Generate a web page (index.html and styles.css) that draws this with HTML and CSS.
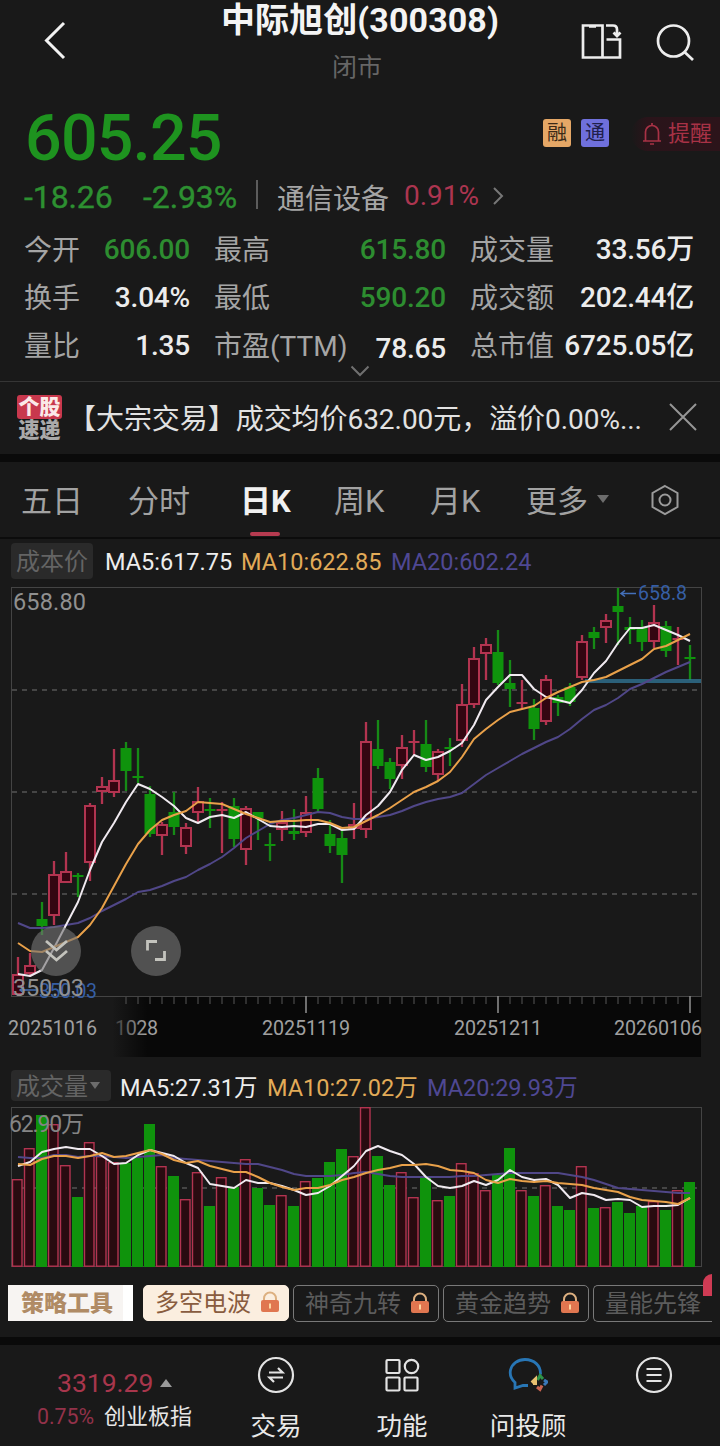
FILE: index.html
```html
<!DOCTYPE html>
<html lang="zh-CN">
<head>
<meta charset="utf-8">
<title>中际旭创(300308)</title>
<link rel="stylesheet" href="styles.css">
</head>
<body>
<header class="topbar">
  <svg class="back" width="24" height="42" viewBox="0 0 24 42"><path d="M21 3 3.500 20.500 21 38"/></svg>
  <div class="heading"><h1>中际旭创(300308)</h1><p>闭市</p></div>
  <div class="top-actions">
    <svg width="42" height="40" viewBox="0 0 42 40"><path d="M2 3.500h19.500v32H2zM8 4.500h7M21.500 35.500H39V17.500H25.500M25 3.500h7q4 0 4 4V13M32.500 10.500 36 14l3.500-3.500"/></svg>
    <svg width="42" height="40" viewBox="0 0 42 40"><circle cx="18.500" cy="19" r="15.500"/><path d="m29.500 30 8.500 8"/></svg>
  </div>
</header>

<section class="quote">
  <div class="price-row">
    <strong class="price">605.25</strong>
    <span class="tag margin">融</span><span class="tag connect">通</span>
    <span class="remind"><svg width="20" height="24" viewBox="0 0 20 24"><path d="M1 19h18M3.500 19v-9a6.500 6.500 0 0 1 13 0v9M10 3.500V1M8 22h4"/></svg>提醒</span>
  </div>
  <div class="change-row">
    <span class="chg">-18.26</span><span class="chg pct">-2.93%</span><i class="bar"></i>
    <span class="sector">通信设备</span><span class="sector-pct">0.91%</span>
    <svg width="12" height="20" viewBox="0 0 12 20"><path d="m2 2 8 8-8 8"/></svg>
  </div>
  <dl class="stats">
    <div><dt>今开</dt><dd class="down">606.00</dd></div>
    <div><dt>最高</dt><dd class="down">615.80</dd></div>
    <div><dt>成交量</dt><dd>33.56万</dd></div>
    <div><dt>换手</dt><dd>3.04%</dd></div>
    <div><dt>最低</dt><dd class="down">590.20</dd></div>
    <div><dt>成交额</dt><dd>202.44亿</dd></div>
    <div><dt>量比</dt><dd>1.35</dd></div>
    <div><dt>市盈(TTM)</dt><dd class="low">78.65</dd></div>
    <div><dt>总市值</dt><dd>6725.05亿</dd></div>
  </dl>
  <svg class="expand" width="20" height="12" viewBox="0 0 20 12"><path d="m1.500 1.500 8.500 8.500 8.500-8.500"/></svg>
</section>

<section class="news">
  <div class="news-logo"><b>个股</b><b>速递</b></div>
  <p>【大宗交易】成交均价632.00元，溢价0.00%...</p>
  <svg width="28" height="28" viewBox="0 0 28 28"><path d="m1 1 26 26M27 1 1 27"/></svg>
</section>

<nav class="tabs">
  <span>五日</span><span>分时</span><span class="active">日K</span><span>周K</span><span>月K</span><span>更多</span>
  <i class="caret"></i>
  <svg width="30" height="32" viewBox="0 0 30 32"><path d="M15 2 27.500 9v14L15 30 2.500 23V9z"/><circle cx="15" cy="16" r="5.500"/></svg>
</nav>

<section class="legend">
  <span class="chip cost">成本价</span>
  <span class="ma5">MA5:617.75</span><span class="ma10">MA10:622.85</span><span class="ma20">MA20:602.24</span>
</section>
<svg class="chart" id="price" width="720" height="478" viewBox="0 580 720 478">
  <defs>
    <linearGradient id="shade" x1="0" x2="1" y1="0" y2="0"><stop offset="0" stop-color="#080808" stop-opacity="0"/><stop offset=".06" stop-color="#080808"/><stop offset="1" stop-color="#080808"/></linearGradient>
    <linearGradient id="fade" gradientUnits="userSpaceOnUse" x1="112" x2="146" y1="0" y2="0"><stop offset="0" stop-color="#333"/><stop offset="1" stop-color="#a0a0a0"/></linearGradient>
  </defs>
  <rect x="112" y="997" width="589" height="60" fill="url(#shade)"/>
  <g class="frame"><rect x="11.500" y="587.500" width="690" height="409"/></g>
  <g class="dash"><path d="M12 690H701M12 792H701M12 894H701"/></g>
  <g id="ticks"></g>
  <g id="candles"></g>
  <rect x="585" y="679" width="116" height="4" fill="#32789a" opacity=".75"/>
  <g id="price-lines"></g>
  <g class="round"><circle cx="56" cy="951" r="25"/><circle cx="156" cy="951" r="25"/></g>
  <path class="glyph" d="m46 941 10.500 9L67 941M46 951l10.500 9L67 951"/>
  <path class="glyph" d="M147.500 950.500v-9h9.500M155 959.500h9.500V951"/>
  <g class="mark"><path d="M636 593.500h-15m4-3-4 3 4 3M38 990H20m4-3-4 3 4 3"/><text x="638" y="600" textLength="49">658.8</text><text x="39" y="998" textLength="58">350.03</text></g>
  <g class="scale"><text x="13" y="610" textLength="73">658.80</text><text x="13" y="995.500" textLength="71">350.03</text></g>
  <g class="dates"><text x="8" y="1035" textLength="89">20251016</text><text x="115" y="1035" textLength="43" fill="url(#fade)">1028</text><text x="262" y="1035" textLength="88">20251119</text><text x="454" y="1035" textLength="88">20251211</text><text x="614" y="1035" textLength="88">20260106</text></g>
</svg>

<section class="legend volume">
  <span class="chip"><em>成交量</em><i class="caret"></i></span>
  <span class="ma5">MA5:27.31万</span><span class="ma10">MA10:27.02万</span><span class="ma20">MA20:29.93万</span>
</section>
<svg class="chart" id="volume" width="720" height="166" viewBox="0 1104 720 166">
  <g class="frame"><rect x="11.500" y="1107.500" width="690" height="159"/></g>
  <g class="dash"><path d="M12 1188H701"/></g>
  <g id="bars"></g>
  <g id="volume-lines"></g>
  <g class="scale vol"><text x="9" y="1132" textLength="75">62.90万</text></g>
</svg>

<section class="tools">
  <b class="tools-title">策略工具</b>
  <span class="tool on">多空电波<svg class="lock" width="20" height="22" viewBox="0 0 20 22"><path d="M4 10V7.500a6 6 0 0 1 12 0V10"/><rect x="1" y="9" width="18" height="12" rx="2"/><path class="key" d="M10 12.500v5"/></svg></span>
  <span class="tool">神奇九转<svg class="lock" width="20" height="22" viewBox="0 0 20 22"><path d="M4 10V7.500a6 6 0 0 1 12 0V10"/><rect x="1" y="9" width="18" height="12" rx="2"/><path class="key" d="M10 12.500v5"/></svg></span>
  <span class="tool">黄金趋势<svg class="lock" width="20" height="22" viewBox="0 0 20 22"><path d="M4 10V7.500a6 6 0 0 1 12 0V10"/><rect x="1" y="9" width="18" height="12" rx="2"/><path class="key" d="M10 12.500v5"/></svg></span>
  <span class="tool cut">量能先锋</span>
  <i class="badge"></i>
</section>

<nav class="bottom">
  <div class="index">
    <p class="points">3319.29<i></i></p>
    <p class="name"><span>0.75%</span>创业板指</p>
  </div>
  <div class="item"><svg width="40" height="40" viewBox="0 0 40 40"><circle cx="20" cy="20" r="17"/><path d="M13 17.500h13.500L22 13M27 22.500H13.500L18 27"/></svg>交易</div>
  <div class="item"><svg width="40" height="40" viewBox="0 0 40 40"><rect x="4.500" y="5" width="13" height="13" rx="1"/><circle cx="29.500" cy="11.500" r="6.700"/><rect x="4.500" y="22.500" width="13" height="13" rx="1"/><rect x="22.500" y="22.500" width="13" height="13" rx="1"/></svg>功能</div>
  <div class="item"><svg width="40" height="40" viewBox="0 0 40 40"><path class="bubble" d="M20 30.500H15L7 33v-5.500C3 24 1.500 20 2.500 15 4 8.500 10 4.500 17 4.500c9 0 16 6 15.500 15"/><path stroke="#2f9448" stroke-width="3" d="m29.500 25 2.500-4.500 3 3.500"/><path stroke="#e8c070" stroke-width="4" d="m24 28 3-3v5"/><path stroke="#c86450" stroke-width="3" d="m29 32 3 2.500 2-4"/><path stroke="#3a78b8" stroke-width="3" d="m36 25 3 2-3 3"/></svg>问投顾</div>
  <div class="item"><svg width="40" height="40" viewBox="0 0 40 40"><circle cx="20" cy="20" r="17"/><path d="M12.500 14h15M12.500 20h15M12.500 26h15"/></svg></div>
</nav>
<script src="chart.js"></script>
</body>
</html>
```
FILE: styles.css
```css
* { box-sizing: border-box; margin: 0; padding: 0; }
body {
  width: 720px; height: 1446px; overflow: hidden;
  background: #191919; color: #e6e6e6;
  font-family: Roboto, "Noto Sans CJK SC", sans-serif;
}
svg { display: block; fill: none; flex: none; }
i, em { font-style: normal; }
span, b, strong, dt, dd, p, h1 { white-space: nowrap; }

.topbar { height: 100px; display: grid; grid-template-columns: 200px 320px 200px; }
.back { margin: 20px 0 0 43px; stroke: #f2f2f2; stroke-width: 3; }
.heading { text-align: center; }
.heading h1 { font-size: 34px; font-weight: 700; line-height: 41px; color: #f4f4f4; letter-spacing: .1px; }
.heading p { font-size: 25px; line-height: 30px; margin-top: 12px; color: #666; padding-right: 6px; }
.top-actions { display: flex; gap: 32px; padding: 22px 0 0 61px; stroke: #ededed; stroke-width: 2.700; }

.quote { height: 282px; border-bottom: 1px solid #353535; }
.price-row { height: 76px; display: flex; align-items: center; padding-left: 25px; }
.price { width: 518px; font-size: 64.500px; font-weight: 500; line-height: 76px; letter-spacing: -.75px; color: #1e931f; }
.tag { width: 28px; height: 28px; margin-right: 10px; margin-top: -10px; border-radius: 3px; font-size: 20px; line-height: 29px; text-align: center; color: #3a2a18; background: #e5a766; }
.tag.connect { background: #6f70dc; color: #20204c; }
.remind { display: flex; align-items: center; gap: 6px; height: 34px; margin: -9px 0 0 12px; padding-left: 11px; width: 89px; font-size: 22px; line-height: 30px; color: #a83246; border-radius: 17px 0 0 17px; background: linear-gradient(90deg, #191919, #2a141a 16px, #2c141a); }
.remind svg { stroke: #a83246; stroke-width: 1.700; }
.change-row { height: 42px; display: flex; align-items: center; padding-left: 24px; }
.chg { width: 119px; font-size: 32px; color: #2d9031; letter-spacing: -.1px; -webkit-text-stroke: .4px #2d9031; }
.chg.pct { width: 112px; }
.bar { width: 2px; height: 29px; margin: -5px 19px 0 1px; background: #5c5c5c; }
.sector { width: 127px; font-size: 28px; color: #a5a5a5; }
.sector-pct { width: 88px; font-size: 28px; color: #ac3550; margin-top: -3px; }
.change-row svg { stroke: #777; stroke-width: 2; margin-top: -2px; }
.stats { height: 144px; margin-top: 8px; padding-left: 24px; display: grid; grid-template-columns: 166px 232px 224px; grid-template-rows: repeat(3, 48px); column-gap: 24px; }
.stats div { display: flex; justify-content: space-between; align-items: center; }
.stats dt { font-size: 28px; line-height: 46px; padding-top: 2px; color: #a5a5a5; }
.stats dd { font-size: 28px; font-weight: 500; line-height: 46px; letter-spacing: -.2px; color: #ececec; }
.stats .down { color: #2d8d30; }
.stats .low { padding-top: 5px; }
.expand { margin: -5px auto 0; stroke: #707070; stroke-width: 2; }

.news { height: 80px; display: flex; align-items: center; padding: 0 0 4px 17px; border-bottom: 8px solid #0a0a0a; }
.news-logo { width: 45px; display: flex; flex-direction: column; padding-top: 3px; }
.news-logo b { font-size: 21px; line-height: 22px; height: 22px; text-align: center; font-weight: 900; color: #aaa; }
.news-logo b:first-child { height: 24px; line-height: 24px; background: #c8384d; border-radius: 3px; color: #fbe9e9; }
.news p { width: 593px; padding-left: 6px; font-size: 28px; letter-spacing: -.05px; color: #e2e2e2; margin-top: 2px; }
.news svg { margin: 1px 0 0 14px; stroke: #969696; stroke-width: 2; }

.tabs { height: 77px; display: flex; align-items: center; border-bottom: 2px solid #0c0c0c; font-size: 31px; line-height: 44px; color: #a2a2a2; padding: 0 0 2px 21px; }
.tabs span { width: 96px; position: relative; padding-top: 6px; }
.tabs span:nth-child(1) { width: 107px; }
.tabs span:nth-child(2) { width: 112px; }
.tabs span:nth-child(3) { width: 94px; }
.tabs .active { color: #f1f1f1; font-weight: 700; }
.tabs .active::after { content: ""; position: absolute; left: 10px; top: 58px; width: 30px; height: 4px; border-radius: 2px; background: #b63b50; }
.tabs span:nth-child(6) { width: 71px; }
.caret { border: 6px solid transparent; border-top: 8px solid #6c6c6c; border-bottom: 0; }
.tabs .caret { margin-right: 41px; margin-top: 0; }
.tabs svg { stroke: #9b9b9b; stroke-width: 2; margin-top: 2px; }

.legend { height: 41px; display: flex; align-items: center; padding: 4px 0 0 11px; font-size: 23.500px; }
.legend span:not(.chip) { padding-top: 1px; }
.chip { width: 82px; height: 36px; margin-top: -2px; border-radius: 4px; background: #2a2a2a; color: #646464; font-size: 24px; line-height: 39px; text-align: center; margin-right: 12px; }
.legend .ma5 { color: #ededed; width: 136px; }
.legend .ma10 { color: #e2ab58; width: 150px; }
.legend .ma20 { color: #4f4893; }
.volume { height: 46px; padding-top: 9px; }
.volume .chip { width: 100px; height: 31px; line-height: 31px; margin: 0 9px 0 0; display: flex; align-items: center; padding-left: 5px; }
.volume .chip em { padding-top: 4px; }
.volume .chip .caret { border-width: 7px 5px 0; margin-left: 2px; }
.volume .ma5 { width: 147px; }
.volume .ma10 { width: 160px; }

.frame { stroke: #444; }
.dash { stroke: #545454; stroke-width: 1.300; stroke-dasharray: 5 5; }
.up { fill: #330611; stroke: #b23450; stroke-width: 2; }
.down-bar { fill: #0f930c; }
.wick-up { stroke: #b23450; stroke-width: 2.300; }
.wick-down { stroke: #168a16; stroke-width: 2.300; }
.line { stroke-width: 2; stroke-linejoin: round; }
.line.w { stroke: #f0eaf0; }
.line.y { stroke: #e9a14a; }
.line.p { stroke: #504788; }
.round { fill: #747474; fill-opacity: .62; }
.glyph { stroke: #c3c3bd; stroke-width: 2.800; }
.mark { font-size: 19.500px; fill: #365fa5; }
.mark path { stroke: #4470ba; stroke-width: 1.500; fill: none; }
.scale { font-size: 23.500px; fill: #909090; }
.scale.vol { font-size: 23px; fill: #858585; }
.dates { font-size: 19.700px; fill: #a0a0a0; }

.tools { position: relative; height: 75px; display: flex; gap: 4px; padding: 15px 8px 0; border-bottom: 8px solid #0a0a0a; }
.tools-title { width: 125px; height: 36px; margin-right: 6px; padding-right: 10px; background: #f7f4f2; border-right: 10px solid #fff; font-size: 23px; font-weight: 900; line-height: 37px; text-align: right; color: #b08b65; }
.tool { width: 146px; height: 37px; flex: none; display: flex; align-items: center; border: 1.500px solid #797979; border-radius: 5px; padding-left: 11px; font-size: 24px; line-height: 34px; color: #5c5c5c; }
.tool.on { background: #fbeedf; border-color: #fbeedf; color: #895c40; height: 36px; }
.tool.cut { width: 119px; border-right: 0; border-radius: 5px 0 0 5px; }
.lock { margin-left: 9px; margin-top: -2px; stroke: #ddb080; stroke-width: 2; }
.lock rect { fill: #e07650; stroke: none; }
.lock .key { stroke: #ffd5a0; }
.badge { position: absolute; left: 703px; top: 4px; width: 9px; height: 22px; background: #cf3b54; border-radius: 9px 0 0 0; }

.bottom { display: grid; grid-template-columns: 213px repeat(4, 126px); height: 101px; }
.index { padding-top: 22px; }
.points { display: flex; align-items: center; gap: 7px; padding-left: 57px; font-size: 26.500px; line-height: 32px; color: #a8364c; }
.points i { border: 6px solid transparent; border-bottom: 8px solid #9a9a9a; border-top: 0; }
.name { display: flex; align-items: center; padding-left: 37px; font-size: 22px; line-height: 34px; margin-top: 1px; color: #e6e6e6; }
.name span { width: 67px; font-size: 21.300px; color: #93324a; }
.item { display: flex; flex-direction: column; align-items: center; padding-top: 10px; font-size: 25.500px; line-height: 36px; color: #e9e9e9; }
.item svg { margin-bottom: 13px; stroke: #e3e3e3; stroke-width: 2.200; }
.item .bubble { stroke: #2876b5; stroke-width: 2.800; }
```
FILE: chart.js
```javascript
const STEP = 12, LEFT = 18;
const x = i => LEFT + i * STEP;

// direction, wick top, body top, body bottom, wick bottom
const candles = `r957 974 995 996|r953 965 974 977|g902 919 926 935|r861 874 916 925|r852 871 883 883|g873 875 877 897|r803 805 863 881|r777 786 792 804|r749 780 793 797|g742 748 771 791|g748 776 778 783|g786 794 834 837|r822 824 836 855|g792 812 827 835|r823 827 847 854|r787 801 813 823|g798 809 811 828|r802 809 811 853|g798 806 839 847|r806 808 850 865|g812 812 818 840|g833 844 846 861|r811 822 830 841|g809 831 834 840|r796 812 833 837|g768 778 809 813|g820 834 846 853|g831 838 855 883|r803 824 829 839|r722 741 830 838|g720 749 766 769|g758 762 779 789|r735 747 766 779|r730 741 743 755|g720 744 767 772|r749 751 775 781|g738 747 749 766|r684 704 741 747|r647 658 705 708|r638 644 654 680|g630 652 683 685|g660 683 689 707|r680 702 704 709|g699 708 729 740|r675 679 722 725|g695 697 703 716|g683 687 702 706|r635 641 678 680|g627 632 638 649|r614 620 628 643|g588 606 612 645|g617 627 630 644|g620 627 642 651|r605 622 642 648|g621 626 651 657|r627 638 640 665|g645 657 659 680`
  .split("|").map(s => [s[0], ...s.slice(1).split(" ").map(Number)]);

const priceAverages = {
  p: [923,928,928,927,925,923,918,911,905,899,892,890,886,881,877,870,864,857,848,838,831,824,820,818,815,812,813,817,819,819,817,815,811,806,802,799,797,793,784,775,768,761,754,748,742,737,729,719,710,705,698,689,684,678,672,667,662],
  w: [974,976,970,948,925,902,870,842,823,802,784,789,797,806,818,823,817,815,818,812,819,826,827,826,827,824,824,830,829,815,806,792,770,755,760,757,751,743,725,700,687,675,675,689,697,700,703,690,673,661,643,628,628,625,630,635,641],
  y: [943,951,952,947,942,937,925,908,886,864,844,830,820,815,811,802,803,804,809,814,818,822,821,821,820,820,823,828,827,821,815,808,800,792,787,781,772,757,739,729,720,712,709,706,698,692,687,682,680,677,671,665,659,649,646,640,634]
};

const volumes = [1179,1148,1115,1124,1165,1197,1142,1156,1162,1163,1158,1124,1166,1176,1199,1172,1206,1177,1187,1159,1188,1205,1195,1206,1181,1178,1162,1149,1156,1107,1156,1185,1172,1197,1176,1200,1196,1163,1173,1190,1175,1148,1190,1196,1185,1206,1210,1166,1208,1207,1202,1213,1206,1201,1210,1190,1182];
const volumeKinds = "rrgrrgrrrgggrgrrgrgrggrgrgggrrggrrgrgrrrggrgrggrgrgggrgrg";

const volumeAverages = {
  p: [1157,1158,1158,1155,1155,1157,1156,1156,1157,1158,1157,1156,1155,1158,1159,1160,1161,1162,1163,1164,1164,1167,1170,1174,1176,1176,1176,1175,1173,1172,1174,1176,1177,1177,1177,1177,1177,1176,1176,1175,1174,1173,1173,1173,1173,1173,1175,1177,1180,1184,1188,1189,1190,1191,1192,1193,1193],
  w: [1166,1162,1152,1149,1147,1149,1149,1156,1164,1163,1155,1150,1153,1156,1163,1168,1184,1186,1188,1180,1183,1183,1186,1190,1195,1193,1186,1176,1166,1151,1146,1151,1155,1164,1177,1186,1188,1186,1181,1185,1180,1170,1177,1180,1179,1185,1198,1193,1195,1200,1199,1200,1207,1206,1206,1205,1198],
  y: [1164,1165,1159,1156,1156,1158,1156,1153,1157,1156,1153,1150,1154,1160,1163,1161,1166,1169,1172,1172,1177,1183,1187,1190,1188,1188,1185,1180,1177,1173,1170,1168,1165,1165,1164,1166,1170,1171,1173,1180,1183,1179,1181,1182,1181,1183,1184,1185,1188,1190,1192,1197,1200,1201,1202,1204,1198]
};

const put = (id, markup) => { document.getElementById(id).innerHTML = markup; };

const lines = set => Object.entries(set).map(([name, ys]) =>
  `<polyline class="line ${name}" points="${ys.map((y, i) => x(i) + "," + y).join(" ")}"/>`).join("");

put("candles", candles.map(([kind, high, top, bottom, low], i) => {
  const cx = x(i), up = kind === "r";
  const wick = up
    ? `<path class="wick-up" d="M${cx} ${high}V${top}M${cx} ${bottom}V${low}"/>`
    : `<path class="wick-down" d="M${cx} ${high}V${low}"/>`;
  const body = !up
    ? `<rect class="down-bar" x="${cx - 5.5}" y="${top}" width="11" height="${bottom - top}"/>`
    : bottom - top < 3
      ? `<rect x="${cx - 5.5}" y="${top}" width="11" height="2" fill="#b23450"/>`
      : `<rect class="up" x="${cx - 5}" y="${top + 1}" width="10" height="${bottom - top - 2}"/>`;
  return wick + body;
}).join(""));

put("bars", volumes.map((top, i) => volumeKinds[i] === "g"
  ? `<rect class="down-bar" x="${x(i) - 6}" y="${top}" width="11" height="${1267 - top}"/>`
  : `<rect class="up" style="stroke-width:1.4;fill:#290b10" x="${x(i) - 5.5}" y="${top + .7}" width="9.5" height="${1265.5 - top}"/>`).join(""));

let ticks = "";
for (let i = 9; i <= 56; i++) {
  const major = (i - 24) % 16 === 0 && i > 9;
  ticks += `<path d="M${x(i)} 996V${major ? 1013 : 1004}" stroke="${major ? "#8a8a8a" : "#464646"}" stroke-width="${major ? 1.6 : 1.3}"/>`;
}
put("ticks", ticks);
put("price-lines", lines(priceAverages));
put("volume-lines", lines(volumeAverages));
```
